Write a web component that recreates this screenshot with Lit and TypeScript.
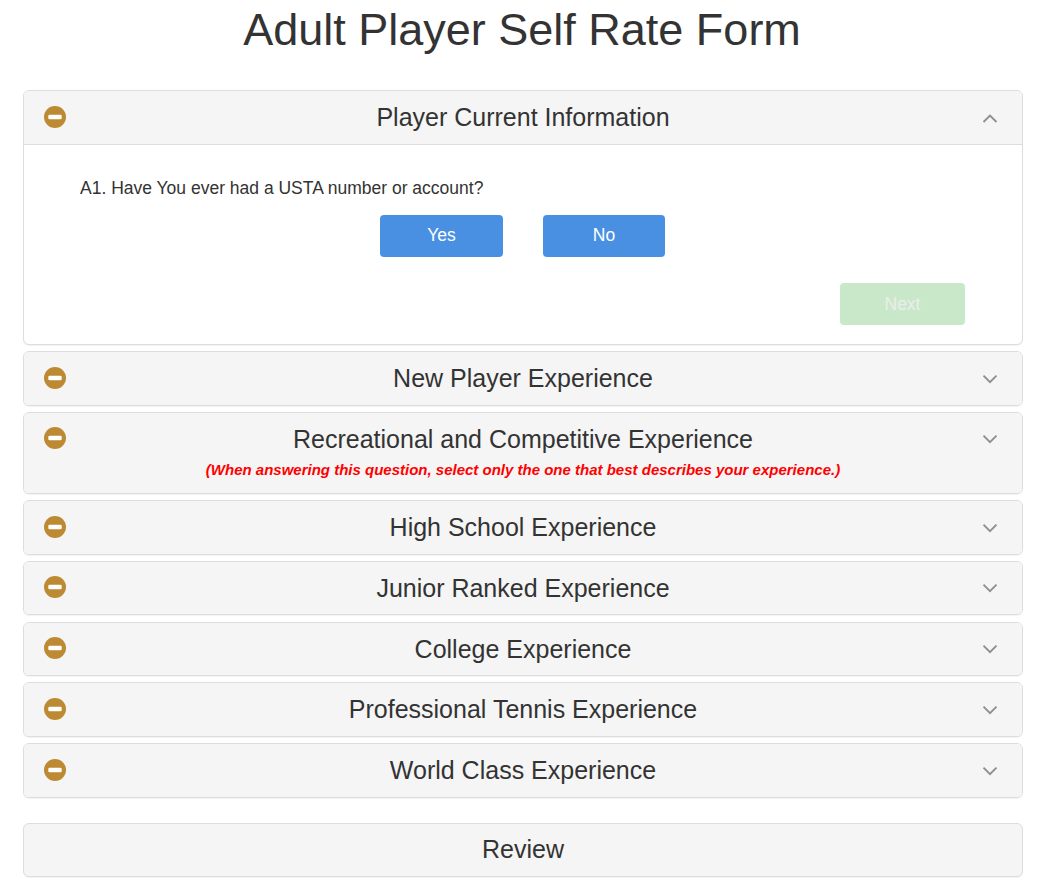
import { LitElement, html, css } from "lit";
import { customElement } from "lit/decorators.js";

const minus = html`<svg class="minus" viewBox="0 0 22 22" width="22" height="22" aria-hidden="true"><circle cx="11" cy="11" r="11" fill="#bd8a33"></circle><rect x="4.3" y="8.7" width="13.4" height="4.6" rx="1.4" fill="#fff"></rect></svg>`;
const chev = (up: boolean) => html`<svg class="chev" viewBox="0 0 16 10" width="16" height="10" aria-hidden="true"><path d="${up ? "M1.5 9 L8 2.5 L14.5 9" : "M1.5 1.6 L8 8.1 L14.5 1.6"}" fill="none" stroke="#8f8f8f" stroke-width="1.9"></path></svg>`;

@customElement("app-root")
export class AppRoot extends LitElement {
  static styles = css`
    :host { display: block; font-family: "Liberation Sans", Arial, sans-serif; color: #333; background: #fff; height: 891px; overflow: hidden; }
    h1 { margin: 0; padding: 5px 8px 0 0; height: 90px; box-sizing: border-box; text-align: center; font-size: 45px; font-weight: 400; line-height: 49.5px; }
    .wrap { padding: 0 29px 0 23px; display: flex; flex-direction: column; gap: 6.23px; }
    .panel { border: 1px solid #ddd; border-radius: 6px; background: #fff; box-shadow: 0 1px 1px rgba(0,0,0,.05); overflow: hidden; }
    .head { position: relative; background: #f5f5f5; height: 52.5px; display: flex; flex-direction: column; align-items: center; font-size: 25px; line-height: 52px; }
    .head.open { height: 53px; border-bottom: 1px solid #ddd; }
    .head.tall { height: 80.2px; }
    .title { height: 52.5px; flex: none; }
    .note { color: #f00; font-size: 15px; font-weight: 700; font-style: italic; line-height: 16px; margin-top: -3px; }
    .minus { position: absolute; left: 20px; top: 14.5px; }
    .chev { position: absolute; right: 24px; top: 21.5px; }
    .body { height: 198.85px; padding: 33px 57px 0 56px; box-sizing: border-box; font-size: 17.5px; line-height: 20px; }
    .q { margin: 0 0 17px; }
    .choices { display: flex; justify-content: center; gap: 40px; }
    .btn { border: 0; border-radius: 4px; height: 42px; font: 17.5px/40px "Liberation Sans", Arial, sans-serif; color: #fff; background: #4a90e2; padding: 0; text-align: center; }
    .yes { width: 123px; padding-bottom: 2px; }
    .no { width: 122px; padding-bottom: 2px; }
    .actions { display: flex; justify-content: flex-end; margin-top: 26px; }
    .next { width: 125px; background: #c9e8c9; color: #e9eeea; }
    .review { margin-top: 19.1px; height: 52.5px; background: #f5f5f5; text-align: center; font-size: 25px; line-height: 51px; }
  `;

  render() {
    const rows = ["High School Experience", "Junior Ranked Experience", "College Experience", "Professional Tennis Experience", "World Class Experience"];
    return html`
      <h1>Adult Player Self Rate Form</h1>
      <div class="wrap">
        <section class="panel">
          <div class="head open">${minus}<div class="title">Player Current Information</div>${chev(true)}</div>
          <div class="body">
            <p class="q">A1. Have You ever had a USTA number or account?</p>
            <div class="choices"><button class="btn yes">Yes</button><button class="btn no">No</button></div>
            <div class="actions"><button class="btn next" disabled>Next</button></div>
          </div>
        </section>
        <section class="panel"><div class="head">${minus}<div class="title">New Player Experience</div>${chev(false)}</div></section>
        <section class="panel"><div class="head tall">${minus}<div class="title">Recreational and Competitive Experience</div><div class="note">(When answering this question, select only the one that best describes your experience.)</div>${chev(false)}</div></section>
        ${rows.map((r) => html`<section class="panel"><div class="head">${minus}<div class="title">${r}</div>${chev(false)}</div></section>`)}
        <section class="panel review">Review</section>
      </div>
    `;
  }
}
